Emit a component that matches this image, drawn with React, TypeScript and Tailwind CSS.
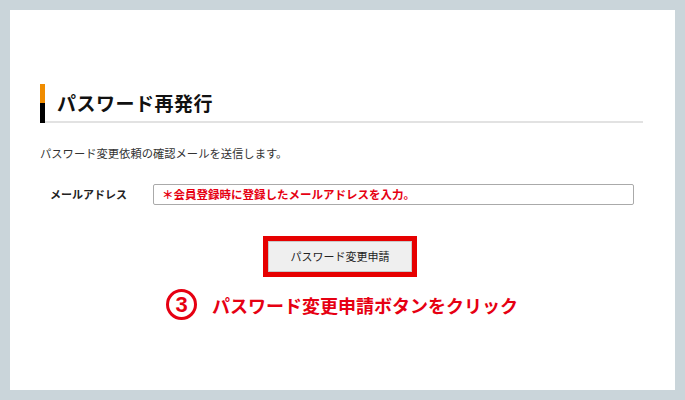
import React from "react";

const font = { fontFamily: '"Noto Sans CJK JP", "Noto Sans", sans-serif' };

const App = () => {
  return (
    <div className="h-[400px] w-[685px] bg-[#cad5da] p-[10px]" style={font}>
      <div className="h-full bg-white pl-[30px] pr-[32px] pt-[74px]">
        {/* Heading */}
        <div className="flex h-[39px]">
          <div className="flex w-[5px] flex-col">
            <div className="h-[19px] bg-[#f08c00]" />
            <div className="flex-1 bg-black" />
          </div>
          <div className="flex flex-1 items-center border-b-2 border-[#e2e2e2] pl-[12px]">
            <h1 className="text-[19px] font-bold leading-none tracking-[0.5px] text-[#111]">
              パスワード再発行
            </h1>
          </div>
        </div>

        <p className="mt-[22px] text-[11.3px] leading-[16px] text-[#333]">
          パスワード変更依頼の確認メールを送信します。
        </p>

        {/* Email row */}
        <div className="mt-[23px] flex items-center pr-[9px]">
          <span className="w-[113px] pl-[10px] text-[11px] font-bold text-[#222]">メールアドレス</span>
          <div className="flex h-[21px] flex-1 items-center rounded-[2px] border border-[#aaa] pl-[8px]">
            <span className="text-[11.5px] font-bold leading-none text-[#e60012]">
              ＊会員登録時に登録したメールアドレスを入力。
            </span>
          </div>
        </div>

        {/* Submit */}
        <div className="mt-[31px] flex justify-center pr-[3px]">
          <div className="border-[5px] border-[#e60000] bg-white">
            <button className="flex h-[31px] w-[144px] items-center justify-center border border-[#c8c8c8] bg-[#efefef] text-[11px] text-[#222]">
              パスワード変更申請
            </button>
          </div>
        </div>

        {/* Annotation */}
        <div className="mt-[12px] flex items-center pl-[126px]">
          <div className="flex h-[31px] w-[31px] items-center justify-center rounded-full border-[3px] border-[#e60012]">
            <span
              className="text-[22px] font-bold leading-none text-[#e60012]"
              style={{ fontFamily: '"Liberation Sans Narrow", "Liberation Sans", sans-serif' }}
            >
              3
            </span>
          </div>
          <span className="ml-[15px] text-[18px] font-bold leading-none text-[#e60012]">
            パスワード変更申請ボタンをクリック
          </span>
        </div>
      </div>
    </div>
  );
};

export default App;
